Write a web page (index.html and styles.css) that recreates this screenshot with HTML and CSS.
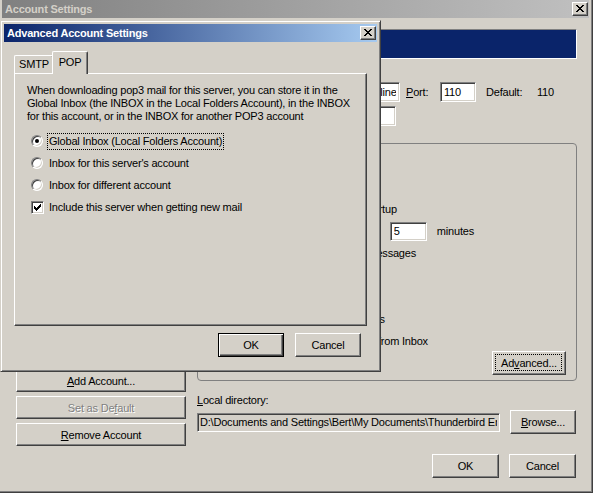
FILE: index.html
```html
<!DOCTYPE html>
<html>
<head>
<meta charset="utf-8">
<title>Account Settings</title>
<link rel="stylesheet" href="styles.css">
</head>
<body>
<div class="window outer">
  <div class="titlebar inactive">
    <span class="title">Account Settings</span>
    <span class="tb-close"><svg width="8" height="7" viewBox="0 0 8 7" shape-rendering="crispEdges"><path d="M0 0h2v1h-2zM6 0h2v1h-2zM1 1h2v1h-2zM5 1h2v1h-2zM2 2h4v1h-4zM3 3h2v1h-2zM2 4h4v1h-4zM1 5h2v1h-2zM5 5h2v1h-2zM0 6h2v1h-2zM6 6h2v1h-2z" fill="#000"/></svg></span>
  </div>
  <div class="client">
    <div class="main">
      <div class="left-col">
        <div class="tree">
          <div class="tree-item">pop3.mailserver.online</div>
          <div class="tree-sub">Server Settings</div>
          <div class="tree-sub">Copies &amp; Folders</div>
          <div class="tree-sub">Composition &amp; Addressing</div>
          <div class="tree-item">Local Folders</div>
        </div>
        <div class="acct-buttons">
          <button class="btn wide"><span><u>A</u>dd Account...</span></button>
          <button class="btn wide disabled"><span>Set as De<u>f</u>ault</span></button>
          <button class="btn wide"><span><u>R</u>emove Account</span></button>
        </div>
      </div>
      <div class="right-col">
        <div class="banner">Server Settings</div>
        <div class="field-row server-row">
          <span class="field-label">Server Name:</span>
          <input class="textbox server-box" value="pop3.mailserver.online">
          <span class="port-label"><u>P</u>ort:</span>
          <input class="textbox port-box" value="110">
          <span class="default-label">Default:</span>
          <span>110</span>
        </div>
        <div class="field-row user-row">
          <span class="field-label">User Name:</span>
          <input class="textbox user-box" value="bert">
        </div>
        <div class="groupbox">
          <div class="g-row"><span class="check"></span><span class="c-label">Use secure connection</span></div>
          <div class="g-row"><span class="check"></span><span class="c-label">Use secure login</span></div>
          <div class="g-row"><span class="check"></span><span class="c-label">Check for new messages at startup</span></div>
          <div class="g-row"><span class="check"></span><span class="c-label">Check for new messages every</span><input class="textbox minutes-box" value="5"><span class="after">minutes</span></div>
          <div class="g-row"><span class="check"></span><span class="c-label">Automatically download new messages</span></div>
          <div class="g-row"><span class="check"></span><span class="c-label">Fetch headers only</span></div>
          <div class="g-row"><span class="check"></span><span class="c-label">Leave messages on server</span></div>
          <div class="g-row indent"><span class="radio"></span><span class="c-label">For at most</span><input class="textbox days-box" value="14"><span class="days">days</span></div>
          <div class="g-bottom">
            <div class="g-bottom-rows">
              <div class="g-row indent"><span class="radio"></span><span class="c-label">Until I delete or move them from Inbox</span></div>
              <div class="g-row"><span class="check"></span><span class="c-label">Empty Trash on Exit</span></div>
            </div>
            <button class="btn advanced focused"><span>Ad<u>v</u>anced...</span></button>
          </div>
        </div>
        <div class="localdir-label"><u>L</u>ocal directory:</div>
        <div class="localdir-row">
          <input class="textbox readonly localdir-box" readonly value="D:\Documents and Settings\Bert\My Documents\Thunderbird Email\Local Folders">
          <button class="btn browse"><span><u>B</u>rowse...</span></button>
        </div>
      </div>
    </div>
    <div class="footer">
      <button class="btn dlg">OK</button>
      <button class="btn dlg">Cancel</button>
    </div>
  </div>
</div>

<div class="window inner">
  <div class="titlebar active">
    <span class="title">Advanced Account Settings</span>
    <span class="tb-close"><svg width="8" height="7" viewBox="0 0 8 7" shape-rendering="crispEdges"><path d="M0 0h2v1h-2zM6 0h2v1h-2zM1 1h2v1h-2zM5 1h2v1h-2zM2 2h4v1h-4zM3 3h2v1h-2zM2 4h4v1h-4zM1 5h2v1h-2zM5 5h2v1h-2zM0 6h2v1h-2zM6 6h2v1h-2z" fill="#000"/></svg></span>
  </div>
  <div class="body">
    <div class="tabstrip">
      <div class="tab smtp">SMTP</div>
      <div class="tab pop selected">POP</div>
    </div>
    <div class="panel">
      <div class="para">When downloading pop3 mail for this server, you can store it in the<br>Global Inbox (the INBOX in the Local Folders Account), in the INBOX<br>for this account, or in the INBOX for another POP3 account</div>
      <div class="options">
        <div class="opt"><span class="radio checked"></span><span class="o-label focus">Global Inbox (Local Folders Account)</span></div>
        <div class="opt"><span class="radio"></span><span class="o-label">Inbox for this server's account</span></div>
        <div class="opt"><span class="radio"></span><span class="o-label">Inbox for different account</span></div>
        <div class="opt"><span class="check checked"><svg width="11" height="11" viewBox="1 1 11 11" shape-rendering="crispEdges"><path d="M3 5h1v3h-1zM4 6h1v3h-1zM5 7h1v3h-1zM6 6h1v3h-1zM7 5h1v3h-1zM8 4h1v3h-1zM9 3h1v3h-1z" fill="#000"/></svg></span><span class="o-label">Include this server when getting new mail</span></div>
      </div>
    </div>
    <div class="dlg-buttons">
      <button class="btn dlg default">OK</button>
      <button class="btn dlg">Cancel</button>
    </div>
  </div>
</div>
</body>
</html>
```

FILE: styles.css
```css
* { box-sizing: border-box; }
html, body { margin: 0; padding: 0; }
body {
  width: 593px;
  height: 493px;
  overflow: hidden;
  position: relative;
  background: #d4d0c8;
  font: 11px "Liberation Sans", Arial, sans-serif;
  letter-spacing: -0.2px;
  color: #000;
}

/* windows */
.window {
  position: absolute;
  display: flex;
  flex-direction: column;
  background: #d4d0c8;
  border: 1px solid;
  border-color: #d4d0c8 #404040 #404040 #d4d0c8;
  box-shadow: inset 1px 1px #fff, inset -1px -1px #808080;
  padding: 3px;
}
.outer { left: -2px; top: -4px; width: 595px; height: 497px; }
.inner { left: 0; top: 20px; width: 381px; height: 352px; }

.titlebar {
  height: 18px;
  flex: none;
  display: flex;
  align-items: center;
  padding: 0 1px 0 3px;
  margin-bottom: 1px;
  font-weight: bold;
  color: #fff;
}
.titlebar.active { background: linear-gradient(to right, #0a246a, #a6caf0); }
.titlebar.inactive { background: linear-gradient(to right, #808080, #c0c0c0); color: #d4d0c8; }
.title { flex: 1; white-space: nowrap; }
.tb-close {
  width: 16px;
  height: 14px;
  background: #d4d0c8;
  border: 1px solid;
  border-color: #fff #404040 #404040 #fff;
  box-shadow: inset -1px -1px #808080;
  display: flex;
  align-items: center;
  justify-content: center;
  padding-bottom: 1px;
}
.tb-close svg { display: block; }

/* common controls */
.btn {
  font: inherit;
  letter-spacing: inherit;
  color: #000;
  background: #d4d0c8;
  border: 1px solid;
  border-color: #fff #404040 #404040 #fff;
  box-shadow: inset -1px -1px #808080;
  padding: 0;
  height: 24px;
  display: flex;
  align-items: center;
  justify-content: center;
  position: relative;
  white-space: nowrap;
}
.btn.default {
  border-color: #000;
  box-shadow: inset 1px 1px #fff, inset -1px -1px #404040, inset -2px -2px #808080;
}
.btn.focused::after {
  content: "";
  position: absolute;
  left: 2px; top: 2px; right: 3px; bottom: 3px;
  border: 1px dotted #000;
}
.btn.disabled { color: #808080; text-shadow: 1px 1px #fff; }
.btn.disabled u { text-decoration-color: #808080; }
.btn.dlg { width: 66px; }

.textbox {
  font: inherit;
  letter-spacing: inherit;
  color: #000;
  height: 20px;
  background: #fff;
  border: 1px solid;
  border-color: #808080 #fff #fff #808080;
  box-shadow: inset 1px 1px #404040, inset -1px -1px #d4d0c8;
  padding: 0 3px;
  margin: 0;
  outline: none;
}
.textbox.readonly { background: #d4d0c8; }

.radio {
  flex: none;
  width: 12px;
  height: 12px;
  border-radius: 50%;
  background: #fff;
  border: 1px solid;
  border-color: #808080 #fff #fff #808080;
  box-shadow: inset 1px 1px #404040, inset -1px -1px #d4d0c8;
  position: relative;
}
.radio.checked::after {
  content: "";
  position: absolute;
  left: 3px; top: 3px;
  width: 4px; height: 4px;
  border-radius: 50%;
  background: #000;
}
.check {
  flex: none;
  width: 13px;
  height: 13px;
  background: #fff;
  border: 1px solid;
  border-color: #808080 #fff #fff #808080;
  box-shadow: inset 1px 1px #404040, inset -1px -1px #d4d0c8;
}
.check svg { display: block; }

/* outer window client */
.client {
  flex: 1;
  display: flex;
  flex-direction: column;
  padding: 10px 12px 0 14px;
}
.main { display: flex; gap: 11px; }
.left-col { width: 170px; flex: none; display: flex; flex-direction: column; }
.tree {
  height: 333px;
  background: #fff;
  border: 1px solid;
  border-color: #808080 #fff #fff #808080;
  box-shadow: inset 1px 1px #404040, inset -1px -1px #d4d0c8;
  padding: 3px 4px;
  line-height: 16px;
  white-space: nowrap;
  overflow: hidden;
}
.tree-sub { padding-left: 16px; }
.acct-buttons { margin-top: 7px; display: flex; flex-direction: column; gap: 4px; }
.btn.wide { width: 170px; height: 23px; }

.right-col { flex: 1; display: flex; flex-direction: column; }
.banner {
  height: 30px;
  background: #0a246a;
  border: 1px solid;
  border-color: #808080 #fff #fff #808080;
  color: #fff;
  font-weight: bold;
  font-size: 13px;
  padding: 6px 8px;
}
.field-row { display: flex; align-items: center; height: 20px; white-space: nowrap; }
.server-row { margin-top: 23px; }
.user-row { margin-top: 4px; }
.field-label { width: 90px; flex: none; }
.server-box { width: 113px; }
.user-box { width: 109px; }
.port-label { margin-left: 6px; width: 34px; flex: none; }
.port-box { width: 36px; }
.default-label { margin-left: 10px; width: 51px; flex: none; }

.groupbox {
  margin-top: 17px;
  height: 238px;
  border: 1px solid #808080;
  border-radius: 4px;
  padding: 10px 10px 0 14px;
  display: flex;
  flex-direction: column;
}
.g-row { height: 22px; display: flex; align-items: center; white-space: nowrap; }
.g-row.indent { padding-left: 19px; }
.c-label { margin-left: 6px; }
.minutes-box { width: 37px; height: 19px; margin-left: 11px; }
.after { margin-left: 10px; }
.days-box { width: 48px; height: 19px; margin-left: 6px; }
.days { margin-left: 6px; }
.g-bottom { display: flex; justify-content: space-between; align-items: flex-end; }
.btn.advanced { width: 74px; margin-bottom: -1px; }

.localdir-label { margin-top: 13px; line-height: 13px; }
.localdir-row { margin-top: 3px; display: flex; align-items: center; gap: 10px; }
.localdir-box { width: 303px; height: 19px; padding: 0 2px; }
.btn.browse { width: 66px; }

.footer {
  margin-top: 8px;
  display: flex;
  justify-content: flex-end;
  gap: 10px;
  padding-right: 1px;
}
.footer .btn.dlg { width: 67px; }

/* inner dialog */
.body { flex: 1; display: flex; flex-direction: column; padding: 8px 10px 0 10px; }
.tabstrip { display: flex; align-items: flex-end; height: 22px; position: relative; z-index: 1; }
.tab {
  height: 18px;
  background: #d4d0c8;
  border: 1px solid;
  border-bottom: none;
  border-color: #fff #404040 #404040 #fff;
  box-shadow: inset -1px 0 #808080;
  border-radius: 2px 2px 0 0;
  display: flex;
  align-items: center;
  justify-content: center;
  padding-bottom: 2px;
}
.tab.smtp { width: 40px; }
.tab.selected {
  width: 36px;
  height: 23px;
  margin-left: -2px;
  margin-bottom: -1px;
  padding-bottom: 3px;
}
.panel {
  height: 253px;
  border: 1px solid;
  border-color: #fff #404040 #404040 #fff;
  box-shadow: inset -1px -1px #808080;
  padding: 10px 12px;
}
.para { line-height: 13px; white-space: nowrap; }
.options { margin-top: 7px; }
.opt { height: 22px; display: flex; align-items: center; padding-left: 4px; white-space: nowrap; }
.o-label {
  margin-left: 4px;
  padding: 1px;
  line-height: 13px;
  border: 1px dotted transparent;
}
.check + .o-label { margin-left: 3px; }
.o-label.focus { border-color: #000; }
.dlg-buttons {
  margin-top: 7px;
  display: flex;
  justify-content: flex-end;
  gap: 11px;
  padding-right: 6px;
}
```
